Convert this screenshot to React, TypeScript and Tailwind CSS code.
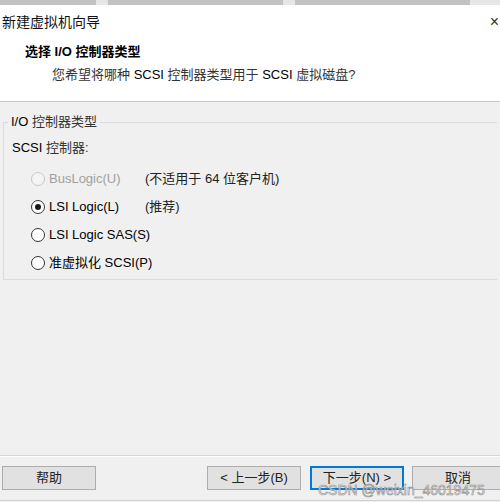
import React from 'react';

const FONT = 'font-["Liberation_Sans","Noto_Sans_CJK_SC",sans-serif]';

interface RadioProps {
  label: string;
  note?: string;
  checked?: boolean;
  disabled?: boolean;
}

const Radio: React.FC<RadioProps> = ({ label, note, checked, disabled }) => (
  <div className="flex items-center h-[28px] whitespace-nowrap">
    <span
      className={`shrink-0 w-[14px] h-[14px] rounded-full border flex items-center justify-center ${
        disabled ? 'border-[#c8c8c8] bg-[#f4f4f4]' : 'border-[#333333] bg-white'
      }`}
    >
      {checked && <span className="w-[6px] h-[6px] rounded-full bg-[#1a1a1a]" />}
    </span>
    <span className={`ml-[4px] min-w-[96px] ${disabled ? 'text-[#a0a0a0]' : 'text-black'}`}>{label}</span>
    {note && <span className="text-[#222]">{note}</span>}
  </div>
);

const Button: React.FC<{ label: string; focused?: boolean; className?: string }> = ({ label, focused, className }) => (
  <div
    className={`shrink-0 h-[24px] flex items-center justify-center bg-[#e1e1e1] border whitespace-nowrap ${
      focused ? 'border-[#0078d7] border-2' : 'border-[#adadad]'
    } text-[13px] text-[#222] ${className ?? ''}`}
  >
    {label}
  </div>
);

export default function App() {
  return (
    <div className={`relative w-[500px] h-[502px] bg-[#f0f0f0] overflow-hidden text-[13px] ${FONT}`}>
      {/* window strip at the top */}
      <div className="flex h-[5px] bg-[#e6e6e6]">
        <div className="w-[96px] bg-[#c2c2c2]" />
        <div className="w-[12px]" />
        <div className="w-[175px] bg-[#c2c2c2]" />
        <div className="w-[12px]" />
        <div className="w-[175px] bg-[#c2c2c2]" />
      </div>

      {/* header */}
      <div className="bg-white h-[97px] border-b border-[#c8c8c8] flex flex-col">
        <div className="flex items-center justify-between h-[34px] pl-[2px] pr-[1px]">
          <span className="text-[14px] text-[#111]">新建虚拟机向导</span>
          <span className="text-[16px] text-[#333] leading-none">×</span>
        </div>
        <div className="pl-[25px] mt-[4px] font-bold text-black leading-[18px]">选择 I/O 控制器类型</div>
        <div className="pl-[52px] mt-[5px] text-[#333] leading-[18px]">
          您希望将哪种 <span className="text-black">SCSI</span> 控制器类型用于 <span className="text-black">SCSI</span> 虚拟磁盘?
        </div>
      </div>

      {/* group box */}
      <fieldset className="mx-[3px] mt-[12px] h-[166px] border border-[#dcdcdc] border-r-0 pl-[8px] pt-0 min-w-0">
        <legend className="px-[3px] -ml-[4px] text-black leading-[16px]">
          I/O <span className="text-[#333]">控制器类型</span>
        </legend>
        <div className="mt-[9px] leading-[18px]">
          SCSI <span className="text-[#333]">控制器:</span>
        </div>
        <div className="mt-[8px] pl-[19px] flex flex-col">
          <Radio label="BusLogic(U)" note="(不适用于 64 位客户机)" disabled />
          <Radio label="LSI Logic(L)" note="(推荐)" checked />
          <Radio label="LSI Logic SAS(S)" />
          <Radio label="准虚拟化 SCSI(P)" />
        </div>
      </fieldset>

      {/* footer */}
      <div className="absolute left-0 right-0 bottom-0 h-[47px] border-t border-[#d6d6d6] bg-[#f0f0f0]">
        <div className="h-[1px] bg-white" />
        <div className="flex items-center mt-[9px] pl-[2px] h-[24px]">
          <Button label="帮助" className="w-[94px]" />
          <div className="flex-1" />
          <Button label="< 上一步(B)" className="w-[94px]" />
          <Button label="下一步(N) >" focused className="w-[94px] ml-[9px]" />
          <Button label="取消" className="w-[92px] ml-[8px] -mr-[4px]" />
        </div>
        <div className="absolute left-0 right-0 bottom-[1px] h-[1px] bg-[#d0d0d0]" />
      </div>

      {/* watermark */}
      <div className="absolute left-[318px] top-[481px] whitespace-nowrap text-[14px] leading-[18px] text-white/80 [-webkit-text-stroke:0.6px_#8a8a8a] font-['Liberation_Sans',sans-serif]">
        CSDN @weixin_46019475
      </div>
    </div>
  );
}
